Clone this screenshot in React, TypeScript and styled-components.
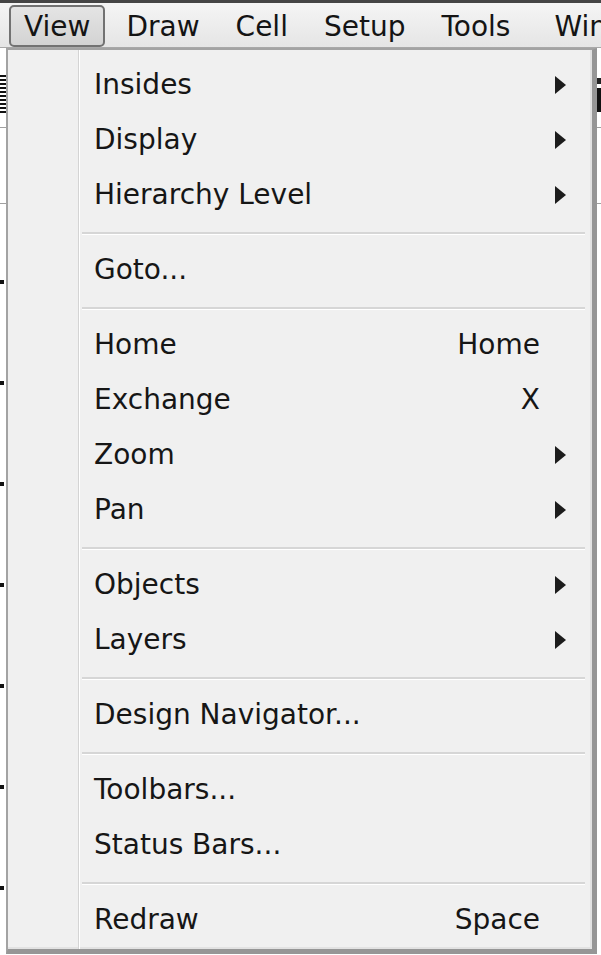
import React from "react";
import styled, { createGlobalStyle } from "styled-components";

const GlobalStyle = createGlobalStyle`
  html, body { margin: 0; padding: 0; }
  body {
    width: 601px;
    height: 955px;
    overflow: hidden;
    background: #ffffff;
    font-family: "DejaVu Sans", Verdana, sans-serif;
  }
`;

const Screen = styled.div`
  position: relative;
  width: 601px;
  height: 955px;
  overflow: hidden;
  background: #ffffff;
  display: flex;
  flex-direction: column;
`;

const TopEdge = styled.div`
  flex: none;
  height: 3px;
  background: #454545;
`;

const MenuBar = styled.div`
  flex: none;
  height: 45px;
  box-sizing: border-box;
  display: flex;
  align-items: flex-end;
  gap: 6px;
  padding-left: 9px;
  background: linear-gradient(#f5f5f5, #e5e5e5);
  border-bottom: 1px solid #a8a8a8;
  overflow: hidden;
`;

const BarItem = styled.div<{ $active?: boolean; $shift?: number }>`
  flex: none;
  height: 42px;
  box-sizing: border-box;
  display: flex;
  align-items: center;
  padding: 0 13px;
  margin-left: ${(p) => p.$shift ?? 0}px;
  border: 2px solid ${(p) => (p.$active ? "#727272" : "transparent")};
  border-radius: 5px;
  background: ${(p) => (p.$active ? "linear-gradient(#e4e4e4, #d3d3d3)" : "transparent")};
  font-size: 28px;
  color: #141414;
  white-space: nowrap;
`;

const Workspace = styled.div`
  flex: 1;
  display: flex;
  flex-direction: column;
`;

const ToolRow = styled.div<{ $h: number }>`
  flex: none;
  height: ${(p) => p.$h}px;
  box-sizing: border-box;
  border-bottom: 1px solid #a0a0a0;
  display: flex;
  justify-content: space-between;
  align-items: center;
`;

const StripedIcon = styled.div`
  width: 6px;
  height: 38px;
  margin-top: 12px;
  background: repeating-linear-gradient(#111 0 2px, #fff 2px 4px);
`;

const BlockIcon = styled.div`
  width: 8px;
  height: 34px;
  margin-top: 14px;
  background: linear-gradient(#222 0 6px, #fff 6px 10px, #111 10px);
`;

const Canvas = styled.div`
  flex: 1;
  display: flex;
  flex-direction: column;
  gap: 97px;
  padding-top: 76px;
`;

const Tick = styled.div`
  width: 4px;
  height: 4px;
  background: #111;
`;

const Dropdown = styled.div`
  position: absolute;
  left: 6px;
  top: 48px;
  width: 591px;
  bottom: 1px;
  box-sizing: border-box;
  border-left: 2px solid #a3a3a3;
  border-top: 2px solid #a3a3a3;
  border-right: 5px solid #969696;
  border-bottom: 5px solid #969696;
  background: #f0f0f0;
  box-shadow: inset -2px -2px 0 #e2e2e2;
  display: flex;
`;

const Gutter = styled.div`
  flex: none;
  width: 70px;
  border-right: 1px solid #d4d4d4;
  box-shadow: 1px 0 0 #ffffff;
`;

const Items = styled.div`
  flex: 1;
  display: flex;
  flex-direction: column;
  padding-top: 7px;
`;

const Row = styled.div`
  height: 55px;
  flex: none;
  display: grid;
  grid-template-columns: 1fr auto 52px;
  align-items: center;
  padding-left: 15px;
  font-size: 28px;
  color: #161616;
  white-space: nowrap;
`;

const Label = styled.span``;

const Shortcut = styled.span`
  text-align: right;
`;

const ArrowCell = styled.span`
  display: flex;
  align-items: center;
  padding-left: 15px;
`;

const Separator = styled.div`
  flex: none;
  height: 20px;
  box-sizing: border-box;
  padding-top: 10px;
  margin: 0 7px 0 3px;
`;

const SepLine = styled.div`
  height: 2px;
  background: #d6d6d6;
  border-bottom: 1px solid #ffffff;
`;

type Item = { label: string; shortcut?: string; sub?: boolean } | "sep";

const items: Item[] = [
  { label: "Insides", sub: true },
  { label: "Display", sub: true },
  { label: "Hierarchy Level", sub: true },
  "sep",
  { label: "Goto..." },
  "sep",
  { label: "Home", shortcut: "Home" },
  { label: "Exchange", shortcut: "X" },
  { label: "Zoom", sub: true },
  { label: "Pan", sub: true },
  "sep",
  { label: "Objects", sub: true },
  { label: "Layers", sub: true },
  "sep",
  { label: "Design Navigator..." },
  "sep",
  { label: "Toolbars..." },
  { label: "Status Bars..." },
  "sep",
  { label: "Redraw", shortcut: "Space" },
];

const Arrow = () => (
  <svg width="11" height="18" viewBox="0 0 11 18">
    <polygon points="0,0 11,9 0,18" fill="#1c1c1c" />
  </svg>
);

export default function App() {
  return (
    <>
      <GlobalStyle />
      <Screen>
        <TopEdge />
        <MenuBar>
          <BarItem $active>View</BarItem>
          <BarItem>Draw</BarItem>
          <BarItem>Cell</BarItem>
          <BarItem>Setup</BarItem>
          <BarItem>Tools</BarItem>
          <BarItem $shift={8}>Window</BarItem>
        </MenuBar>
        <Workspace>
          <ToolRow $h={80}>
            <StripedIcon />
            <BlockIcon />
          </ToolRow>
          <ToolRow $h={76} />
          <Canvas>
            {Array.from({ length: 7 }).map((_, i) => (
              <Tick key={i} />
            ))}
          </Canvas>
        </Workspace>
        <Dropdown>
          <Gutter />
          <Items>
            {items.map((it, i) =>
              it === "sep" ? (
                <Separator key={i}>
                  <SepLine />
                </Separator>
              ) : (
                <Row key={i}>
                  <Label>{it.label}</Label>
                  <Shortcut>{it.shortcut ?? ""}</Shortcut>
                  <ArrowCell>{it.sub ? <Arrow /> : null}</ArrowCell>
                </Row>
              )
            )}
          </Items>
        </Dropdown>
      </Screen>
    </>
  );
}
